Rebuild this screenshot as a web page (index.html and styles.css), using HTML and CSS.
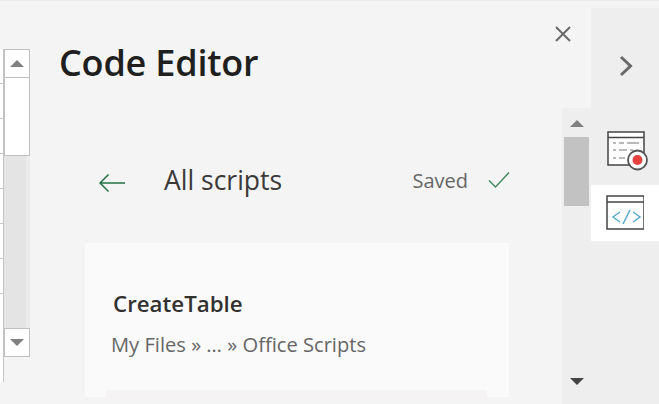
FILE: index.html
```html
<!DOCTYPE html>
<html lang="en">
<head>
  <meta charset="UTF-8">
  <title>Code Editor</title>
  <link rel="stylesheet" href="styles.css">
</head>
<body>

  <!-- Hoja de calculo, solo se ve el borde -->
  <div class="sheet">
    <div class="cells">
      <div class="cell"></div>
      <div class="cell"></div>
      <div class="cell"></div>
      <div class="cell"></div>
      <div class="cell"></div>
      <div class="cell"></div>
      <div class="cell"></div>
      <div class="cell cell-last"></div>
    </div>
    <div class="sheet-scroll">
      <div class="sheet-btn"><span class="tri tri-up"></span></div>
      <div class="sheet-thumb"></div>
      <div class="sheet-track"></div>
      <div class="sheet-btn sheet-btn-down"><span class="tri tri-down"></span></div>
    </div>
  </div>

  <section class="panel">
    <header class="panel-head">
      <h1>Code Editor</h1>
      <svg class="close" width="18" height="18" viewBox="0 0 18 18">
        <path d="M2 2 L16 16 M16 2 L2 16" stroke="#6a6a6a" stroke-width="2" fill="none"/>
      </svg>
    </header>

    <div class="panel-main">
      <div class="content">
        <div class="nav-row">
          <svg class="back" width="28" height="20" viewBox="0 0 28 20">
            <path d="M26 10 H1 M9.500 1.500 L1 10 L9.500 18.500" stroke="#217346" stroke-width="1.500" fill="none"/>
          </svg>
          <span class="all-scripts">All scripts</span>
          <span class="saved">Saved</span>
          <svg class="check" width="22" height="18" viewBox="0 0 22 18">
            <path d="M1 9.500 L7.500 16 L21 1.500" stroke="#3f8a5c" stroke-width="1.500" fill="none"/>
          </svg>
        </div>

        <div class="card">
          <div class="card-title">CreateTable</div>
          <div class="card-path">My Files » … » Office Scripts</div>
          <div class="card-inner"></div>
        </div>
      </div>

      <div class="panel-scroll">
        <span class="tri tri-up"></span>
        <div class="panel-thumb"></div>
        <span class="tri tri-down tri-dark"></span>
      </div>
    </div>
  </section>

  <aside class="rail">
    <div class="rail-toggle">
      <svg width="16" height="22" viewBox="0 0 16 22">
        <path d="M3 2 L12.500 11 L3 20" stroke="#6a6a6a" stroke-width="3" fill="none"/>
      </svg>
    </div>
    <div class="rail-item rail-item-record">
      <svg width="44" height="40" viewBox="0 0 44 40">
        <path d="M1 1 H37 V34 H1 Z" fill="#fff" stroke="#444" stroke-width="1.500"/>
        <path d="M1 6.500 H37" stroke="#444" stroke-width="1.500"/>
        <path d="M6 12 H9 M12 12 H17 M20 12 H32 M6 19 H9 M12 19 H20 M23 19 H26 M6 27 H9 M12 27 H18" stroke="#777" stroke-width="1.200"/>
        <circle cx="30.500" cy="29" r="9.500" fill="#fff" stroke="#555" stroke-width="1.800"/>
        <circle cx="30.500" cy="29" r="5" fill="#e8403f"/>
      </svg>
    </div>
    <div class="rail-item rail-item-on">
      <svg width="38" height="36" viewBox="0 0 38 36">
        <path d="M1 1 H38 V34 H1 Z" fill="#fff" stroke="#444" stroke-width="1.500"/>
        <path d="M1 7 H38" stroke="#444" stroke-width="1.500"/>
        <path d="M14 17 L7 22 L14 27 M27 17 L34 22 L27 27" stroke="#5aa9cc" stroke-width="1.500" fill="none"/>
        <path d="M24 15 L17 29" stroke="#5aa9cc" stroke-width="1.500" fill="none"/>
      </svg>
    </div>
  </aside>

</body>
</html>
```

FILE: styles.css
```css
* {
  margin: 0;
  padding: 0;
  box-sizing: border-box;
}

body {
  display: flex;
  width: 659px;
  height: 404px;
  overflow: hidden;
  background-color: #f4f4f4;
  font-family: "Open Sans", sans-serif;
  border-top: 1px solid #ebebeb;
}

/* Hoja de calculo */
.sheet {
  display: flex;
  flex: 0 0 30px;
  padding-top: 48px;
}

.cells {
  width: 4px;
  background-color: #fff;
  height: 333px;
  border-right: 1px solid #c4c4c4;
}

.cell {
  height: 35px;
  border-bottom: 1px solid #c8c8c8;
}

.cell-last {
  height: 88px;
  border-bottom: none;
}

.sheet-scroll {
  flex: 1;
  display: flex;
  flex-direction: column;
  height: 308px;
}

.sheet-btn {
  height: 29px;
  background-color: #fff;
  border: 1px solid #c0c0c0;
  display: flex;
  align-items: center;
  justify-content: center;
}

.sheet-thumb {
  height: 78px;
  background-color: #fff;
  border: 1px solid #c0c0c0;
  border-top: none;
}

.sheet-track {
  flex: 1;
  background-color: #e4e4e4;
  border-right: 4px solid #ebebeb;
}

.tri {
  display: block;
  width: 0;
  height: 0;
  border-left: 7px solid transparent;
  border-right: 7px solid transparent;
}

.tri-up {
  border-bottom: 7px solid #808080;
}

.tri-down {
  border-top: 7px solid #808080;
}

.tri-dark {
  border-top-color: #444;
}

/* Panel principal */
.panel {
  flex: 1;
  display: flex;
  flex-direction: column;
  min-width: 0;
}

.panel-head {
  display: flex;
  justify-content: space-between;
  align-items: flex-start;
  height: 107px;
  padding: 39px 19px 0 29px;
}

.panel-head h1 {
  font-size: 36px;
  font-weight: 600;
  line-height: 46px;
  letter-spacing: -0.2px;
  color: #201f1e;
}

.close {
  margin-top: -15px;
}

.panel-main {
  flex: 1;
  display: flex;
  min-height: 0;
}

.content {
  flex: 1;
  padding: 0 53px 0 55px;
}

.nav-row {
  display: flex;
  align-items: center;
  height: 135px;
  padding: 15px 0 7px 14px;
}

.back {
  margin: 6px 37px 0 0;
}

.all-scripts {
  font-size: 26.500px;
  color: #3b3a39;
  flex: 1;
}

.saved {
  font-size: 20px;
  color: #666;
  margin: 2px 20px 0 0;
}

.check {
  margin: 1px -1px 0 0;
}

.card {
  height: 154px;
  background-color: #fafafa;
  padding-top: 46px;
}

.card-title {
  font-size: 22.300px;
  font-weight: 600;
  line-height: 30px;
  color: #323130;
  padding-left: 28px;
}

.card-path {
  font-size: 20.150px;
  line-height: 28px;
  color: #666;
  margin-top: 11px;
  padding-left: 26px;
}

.card-inner {
  height: 7px;
  margin: 32px 22px 0 21px;
  background-color: #f5f3f3;
}

.panel-scroll {
  flex: 0 0 29px;
  background-color: #eeeeee;
  display: flex;
  flex-direction: column;
  align-items: center;
  padding-top: 12px;
}

.panel-thumb {
  width: 25px;
  height: 69px;
  margin-top: 10px;
  background-color: #c2c2c2;
}

.panel-scroll .tri-down {
  margin-top: 172px;
}

/* Barra derecha */
.rail {
  flex: 0 0 68px;
  margin-top: 7px;
  background-color: #eeeeee;
}

.rail-toggle {
  height: 101px;
  padding: 14px 0 0 2px;
  display: flex;
  align-items: center;
  justify-content: center;
}

.rail-item {
  display: flex;
  align-items: center;
  justify-content: center;
}

.rail-item-record {
  height: 76px;
  padding: 7px 0 0 8px;
}

.rail-item-on {
  height: 56px;
  background-color: #fff;
}
```
